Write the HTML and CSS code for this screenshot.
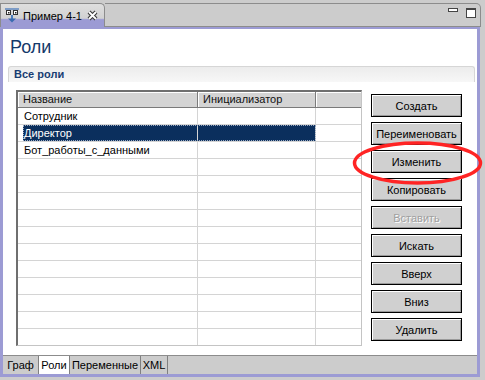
FILE: index.html
```html
<!DOCTYPE html>
<html lang="ru">
<head>
  <meta charset="UTF-8">
  <title>Пример 4-1</title>
  <link rel="stylesheet" href="styles.css">
</head>
<body>
  <div class="folder">
    <div class="tabbar">
      <div class="tab">
        <svg class="tab-icon" width="14" height="16" viewBox="0 0 14 16">
          <rect x="0" y="1" width="14" height="2" fill="#7d9cc6"/>
          <rect x="1.5" y="3.5" width="4" height="4" fill="#fff" stroke="#333"/>
          <rect x="8.5" y="3.5" width="4" height="4" fill="#fff" stroke="#333"/>
          <rect x="3" y="5" width="1.5" height="1.5" fill="#222"/>
          <rect x="10" y="5" width="1.5" height="1.5" fill="#222"/>
          <rect x="6" y="8" width="2" height="4" fill="#4a7cbd"/>
          <path d="M3 11.5h8l-4 4z" fill="#3a6cb0"/>
        </svg>
        <span class="tab-title">Пример 4-1</span>
        <svg class="tab-close" width="11" height="11" viewBox="0 0 11 11">
          <path d="M2 2L9 9M9 2L2 9" stroke="#3a3a3a" stroke-width="4"/>
          <path d="M2 2L9 9M9 2L2 9" stroke="#fff" stroke-width="1.8"/>
        </svg>
      </div>
      <div class="tab-fill">
        <span class="win-min"></span>
        <span class="win-max"></span>
      </div>
    </div>

    <div class="frame">
      <div class="editor">
        <h1 class="page-title">Роли</h1>
        <div class="section">
          <div class="section-head">Все роли</div>
          <div class="section-body">
            <div class="grid">
              <div class="grid-head">
                <div class="hcell c1">Название</div>
                <div class="hcell c2">Инициализатор</div>
                <div class="hcell c3"></div>
              </div>
              <div class="grid-rows">
                <div class="row"><div class="cell c1">Сотрудник</div><div class="cell c2"></div><div class="cell c3"></div></div>
                <div class="row sel"><div class="cell c1">Директор</div><div class="cell c2"></div><div class="cell c3"></div></div>
                <div class="row"><div class="cell c1">Бот_работы_с_данными</div><div class="cell c2"></div><div class="cell c3"></div></div>
                <div class="row"><div class="cell c1"></div><div class="cell c2"></div><div class="cell c3"></div></div>
                <div class="row"><div class="cell c1"></div><div class="cell c2"></div><div class="cell c3"></div></div>
                <div class="row"><div class="cell c1"></div><div class="cell c2"></div><div class="cell c3"></div></div>
                <div class="row"><div class="cell c1"></div><div class="cell c2"></div><div class="cell c3"></div></div>
                <div class="row"><div class="cell c1"></div><div class="cell c2"></div><div class="cell c3"></div></div>
                <div class="row"><div class="cell c1"></div><div class="cell c2"></div><div class="cell c3"></div></div>
                <div class="row"><div class="cell c1"></div><div class="cell c2"></div><div class="cell c3"></div></div>
                <div class="row"><div class="cell c1"></div><div class="cell c2"></div><div class="cell c3"></div></div>
                <div class="row"><div class="cell c1"></div><div class="cell c2"></div><div class="cell c3"></div></div>
                <div class="row"><div class="cell c1"></div><div class="cell c2"></div><div class="cell c3"></div></div>
                <div class="row"><div class="cell c1"></div><div class="cell c2"></div><div class="cell c3"></div></div>
              </div>
            </div>
            <div class="actions">
              <button class="btn">Создать</button>
              <button class="btn">Переименовать</button>
              <button class="btn">Изменить</button>
              <button class="btn">Копировать</button>
              <button class="btn" disabled>Вставить</button>
              <button class="btn">Искать</button>
              <button class="btn">Вверх</button>
              <button class="btn">Вниз</button>
              <button class="btn">Удалить</button>
            </div>
          </div>
        </div>
      </div>
      <div class="pages">
        <div class="page-tab graph">Граф</div>
        <div class="page-tab roles active">Роли</div>
        <div class="page-tab vars">Переменные</div>
        <div class="page-tab xml">XML</div>
      </div>
    </div>
  </div>

  <svg class="mark" width="131" height="45" viewBox="0 0 131 45">
    <ellipse cx="65.5" cy="22" rx="63" ry="20" fill="none" stroke="#ff2424" stroke-width="3.5"/>
  </svg>
</body>
</html>
```

FILE: styles.css
```css
body {
  margin: 0;
  width: 485px;
  height: 380px;
  overflow: hidden;
  position: relative;
  background: #cccccc;
  font-family: "Liberation Sans", Arial, sans-serif;
  font-size: 11px;
  color: #000;
}

.folder {
  width: 481px;
  padding-top: 3px;
}

/* top editor tab strip */
.tabbar {
  display: flex;
  height: 24px;
}

.tab {
  width: 105px;
  box-sizing: border-box;
  display: flex;
  align-items: flex-start;
  padding: 3px 0 0 4px;
  border: 1px solid #8c8c8c;
  border-bottom: none;
  border-top-right-radius: 5px;
  background: linear-gradient(#dedede, #d2d2d2 62%, #9c9bd4 68%);
}

.tab-icon {
  flex: none;
}

.tab-title {
  margin: 2px 0 0 4px;
  line-height: 14px;
  white-space: nowrap;
}

.tab-close {
  margin: 3px 6px 0 auto;
}

.tab-fill {
  flex: 1;
  display: flex;
  justify-content: flex-end;
  align-items: flex-start;
  gap: 8px;
  padding: 4px 4px 0 0;
  border-top: 1px solid #8c8c8c;
  border-bottom: 1px solid #8c8c8c;
  border-right: 1px solid #8c8c8c;
  border-top-right-radius: 5px;
}

.win-min {
  width: 10px;
  height: 4px;
  box-sizing: border-box;
  border: 1px solid #444;
  background: #fff;
}

.win-max {
  width: 10px;
  height: 10px;
  box-sizing: border-box;
  border: 1px solid #444;
  border-top-width: 2px;
  background: #fff;
}

/* editor frame */
.frame {
  margin-right: 1px;
  border: 3px solid #9c9bd4;
  border-top-width: 2px;
}

.editor {
  height: 327px;
  box-sizing: border-box;
  background: #fff;
  border-bottom: 1px solid #8c8c8c;
  overflow: hidden;
}

.page-title {
  margin: 7px 0 0 7px;
  font-size: 18px;
  line-height: 22px;
  font-weight: normal;
  color: #163a6a;
}

.section {
  margin: 8px 2px 0 5px;
}

.section-head {
  height: 16px;
  box-sizing: border-box;
  padding-left: 5px;
  line-height: 15px;
  font-weight: bold;
  color: #173d72;
  border: 1px solid #d6d6d6;
  border-bottom: none;
  border-radius: 3px 3px 0 0;
  background: linear-gradient(#ececec, #f7f7f7);
}

.section-body {
  display: flex;
  align-items: flex-start;
  padding: 8px 0 0 8px;
}

/* roles table */
.grid {
  width: 346px;
  height: 256px;
  box-sizing: border-box;
  border-top: 2px solid #6f6f6f;
  border-left: 2px solid #6f6f6f;
  border-right: 1px solid #c4c4c4;
  border-bottom: 1px solid #c4c4c4;
  overflow: hidden;
}

.grid-head {
  display: flex;
  height: 16px;
}

.hcell {
  box-sizing: border-box;
  padding-left: 5px;
  line-height: 15px;
  color: #111;
  background: #d4d4d4;
  border-right: 1px solid #7a7a7a;
  border-bottom: 1px solid #7a7a7a;
  box-shadow: inset 1px 1px 0 #fff;
}

.c1 { width: 180px; }
.c2 { width: 118px; }
.c3 { flex: 1; }

.hcell.c3 {
  border-right: none;
}

.grid-rows {
  height: 237px;
  overflow: hidden;
}

.row {
  display: flex;
  height: 17px;
  position: relative;
}

.cell {
  box-sizing: border-box;
  padding-left: 6px;
  line-height: 16px;
  border-bottom: 1px solid #d4d4d4;
  border-right: 1px solid #d4d4d4;
  white-space: nowrap;
}

.cell.c3 {
  border-right: none;
}

.row.sel .c1 {
  color: #fff;
  background: linear-gradient(90deg, #fff 0 5px, #0b2f5d 5px);
}

.row.sel .c2 {
  background: #0b2f5d;
}

.row.sel::after {
  content: "";
  position: absolute;
  left: 5px;
  top: 0;
  width: 293px;
  height: 16px;
  box-sizing: border-box;
  border: 1px dotted #9aaac2;
}

/* action buttons */
.actions {
  display: flex;
  flex-direction: column;
  gap: 5px;
  margin: 4px 0 0 9px;
}

.btn {
  width: 91px;
  height: 23px;
  padding: 0;
  font-family: inherit;
  font-size: 11px;
  color: #000;
  background: #d0d0d0;
  border: 1px solid #000;
  box-shadow: inset 1px 1px 0 #fff, inset -1px -1px 0 #9a9a9a;
}

.btn:disabled {
  color: #a0a0a0;
  text-shadow: 1px 1px 0 #fff;
}

/* bottom page tabs */
.pages {
  display: flex;
  height: 18px;
  background: #cccccc;
}

.page-tab {
  box-sizing: border-box;
  line-height: 18px;
  text-align: center;
  white-space: nowrap;
  border-right: 1px solid #808080;
}

.page-tab.graph { width: 36px; }
.page-tab.roles { width: 31px; }
.page-tab.vars { width: 71px; }
.page-tab.xml { width: 27px; }

.page-tab.active {
  background: #fff;
}

.mark {
  position: absolute;
  left: 352px;
  top: 141px;
}
```
